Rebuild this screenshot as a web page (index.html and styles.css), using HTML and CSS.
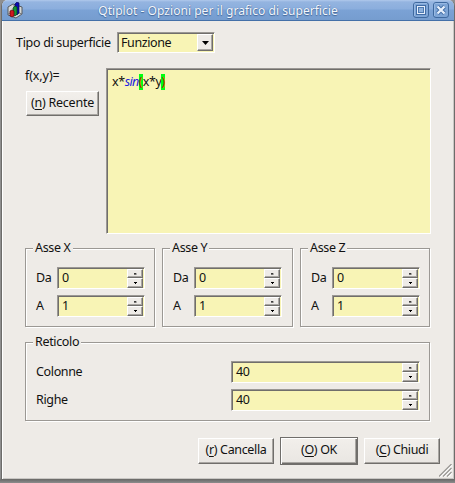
FILE: index.html
```html
<!DOCTYPE html>
<html lang="it">
<head>
<meta charset="utf-8">
<title>Qtiplot - Opzioni per il grafico di superficie</title>
<link rel="stylesheet" href="styles.css">
</head>
<body>
<div class="window">
  <header class="titlebar">
    <svg class="app-icon" width="16" height="17" viewBox="0 0 16 17">
      <path d="M1 5 6 2 15 5v7l-6 4-8-3z" fill="#d6d8d5" stroke="#555a60"/>
      <path d="M1 12 7 9l8 3M7 3v7" fill="none" stroke="#77777a"/>
      <path d="M8 2l2-2 2 1v10l-2 2-2-1z" fill="#0909b4" stroke="#080850" stroke-width=".7"/>
      <path d="M6 6l2-2 2 1v7l-2 2-2-1z" fill="#129335" stroke="#064012" stroke-width=".7"/>
      <path d="M3 9l2-1 2 1v5l-2 1-2-1z" fill="#cf1720" stroke="#5c0508" stroke-width=".7"/>
    </svg>
    <h1 class="title">Qtiplot - Opzioni per il grafico di superficie</h1>
    <svg class="controls" width="37" height="17" viewBox="0 0 37 17">
      <g fill="#7ea5d6" stroke="#3f699f">
        <rect x=".5" y=".5" width="15" height="15" rx="2.5"/>
        <rect x="20.500" y=".5" width="15" height="15" rx="2.500"/>
      </g>
      <g fill="none" stroke="#a4c2e8" opacity=".65"><path d="M1.500 14V2.500Q1.500 1.500 2.500 1.500H14M21.500 14V2.500Q21.500 1.500 22.500 1.500H34"/></g>
      <rect x="3" y="3" width="10" height="10" fill="#416ca5"/>
      <rect x="4.500" y="4.500" width="7" height="7" fill="#4e79b0" stroke="#e7f0fc"/>
      <rect x="6" y="6" width="4" height="4" fill="#8cb0dc"/>
      <path d="M24.500 4.500l7 7m0-7l-7 7" stroke="#416ca5" stroke-width="4"/>
      <path d="M24.500 4.500l7 7m0-7l-7 7" stroke="#e7f0fc" stroke-width="2.300"/>
    </svg>
  </header>
  <main class="content">
    <div class="type-row">
      <span class="type-label">Tipo di superficie</span>
      <div class="combo sunken"><span class="combo-text">Funzione</span><span class="combo-button"><svg width="7" height="4" viewBox="0 0 7 4"><path d="M0 0h7L3.500 4z"/></svg></span></div>
    </div>
    <div class="formula-row">
      <div class="formula-side">
        <span class="formula-label">f(x,y)=</span>
        <button class="button recent"><span>(<u>n</u>) Recente</span></button>
      </div>
      <div class="editor sunken"><span class="formula">x*<i>sin</i><b>(</b>x*y<b>)</b></span></div>
    </div>
    <div class="axes">
      <section class="group axis">
        <h2>Asse X</h2>
        <div class="field"><span>Da</span><div class="spin sunken"><span class="value">0</span><span class="steps"><i class="up"></i><i class="down"></i></span></div></div>
        <div class="field"><span>A</span><div class="spin sunken"><span class="value">1</span><span class="steps"><i class="up"></i><i class="down"></i></span></div></div>
      </section>
      <section class="group axis">
        <h2>Asse Y</h2>
        <div class="field"><span>Da</span><div class="spin sunken"><span class="value">0</span><span class="steps"><i class="up"></i><i class="down"></i></span></div></div>
        <div class="field"><span>A</span><div class="spin sunken"><span class="value">1</span><span class="steps"><i class="up"></i><i class="down"></i></span></div></div>
      </section>
      <section class="group axis">
        <h2>Asse Z</h2>
        <div class="field"><span>Da</span><div class="spin sunken"><span class="value">0</span><span class="steps"><i class="up"></i><i class="down"></i></span></div></div>
        <div class="field"><span>A</span><div class="spin sunken"><span class="value">1</span><span class="steps"><i class="up"></i><i class="down"></i></span></div></div>
      </section>
    </div>
    <section class="group grid-group">
      <h2>Reticolo</h2>
      <div class="field"><span>Colonne</span><div class="spin sunken"><span class="value">40</span><span class="steps"><i class="up"></i><i class="down"></i></span></div></div>
      <div class="field"><span>Righe</span><div class="spin sunken"><span class="value">40</span><span class="steps"><i class="up"></i><i class="down"></i></span></div></div>
    </section>
    <footer class="actions">
      <button class="button"><span>(<u>r</u>) Cancella</span></button>
      <button class="button default"><span>(<u>O</u>) OK</span></button>
      <button class="button"><span>(<u>C</u>) Chiudi</span></button>
    </footer>
  </main>
  <svg class="grip" width="13" height="13" viewBox="0 0 13 13"><path d="M1 13 13 1M5 13l8-8M9 13l4-4" stroke="#fff" stroke-width="1.500"/><path d="M0 12.500 12.500 0M4 12.500 12.500 4M8 12.500 12.500 8" stroke="#9a9894" stroke-width="1.300"/></svg>
</div>
</body>
</html>
```
FILE: styles.css
```css
* { box-sizing: border-box; }
body {
  margin: 0;
  width: 455px;
  height: 483px;
  overflow: hidden;
  background: linear-gradient(#8f8f8f 478px, #6f6f6f 480px, #8c8c8c 483px);
  font: 12.5px/16px "Noto Sans", "Open Sans", sans-serif;
  letter-spacing: -0.35px;
  color: #111;
}
.window {
  position: relative;
  width: 454px;
  height: 480px;
  margin-left: 1px;
  background: #eeebe7;
  border: solid #6d6c6a;
  border-width: 0 1px 1px;
  border-radius: 6px 6px 0 0;
  box-shadow: inset 1px 0 #fff, inset -1px -1px #c9c7c4;
  overflow: hidden;
}
.titlebar {
  display: flex;
  height: 21px;
  padding: 2px 4px 0 5px;
  background: linear-gradient(#b0c9eb 0, #94b4e0 2px, #8baedd 9px, #7ba2d5 10px, #769dcf);
  border-bottom: 1px solid #4470a8;
}
.app-icon { flex: none; }
.title {
  flex: 1;
  margin: 0;
  text-align: center;
  font-weight: 400;
  font-size: 12px;
  line-height: 17px;
  letter-spacing: 0.04px;
  white-space: nowrap;
  color: #f3f7fd;
  text-shadow: 0 1px 1px #44689a, 0 0 1px #44689a;
}
.controls { flex: none; }
.content { display: flex; flex-direction: column; padding: 11px 22px 0 23px; }
.sunken {
  background: #f8f4b5;
  border: 1px solid;
  border-color: #9b9894 #fff #fff #9b9894;
  box-shadow: inset 1px 1px #706e6b;
}
.type-row { display: flex; align-items: center; height: 21px; margin-left: -9px; }
.type-label { width: 101px; white-space: nowrap; letter-spacing: -0.31px; }
.combo { display: flex; width: 98px; height: 21px; padding: 1px; }
.combo-text { flex: 1; padding: 1px 0 0 2px; letter-spacing: -0.4px; }
.combo-button {
  display: flex;
  width: 16px;
  align-items: center;
  justify-content: center;
  background: #eeebe7;
  border: 1px solid;
  border-color: #fff #706e6b #706e6b #fff;
  box-shadow: inset -1px -1px #a9a6a2;
}
.formula-row { display: flex; margin-top: 15px; }
.formula-side { display: flex; flex-direction: column; width: 81px; align-items: flex-start; }
.formula-label { height: 23px; letter-spacing: -0.1px; }
.editor { width: 325px; height: 166px; padding: 5px 4px 5px 5px; }
.formula { display: flex; letter-spacing: -0.4px; }
.formula i { width: 15px; letter-spacing: -0.7px; margin-right: -1px; color: #2020e0; }
.formula b { width: 4px; letter-spacing: 0; font-weight: 400; color: #d32000; background: #00ff12; }
.button {
  height: 26px;
  padding: 0 0 1px;
  font: inherit;
  letter-spacing: inherit;
  color: inherit;
  background: linear-gradient(#f2efeb, #e9e6e2);
  border: 1px solid;
  border-color: #fff #706e6b #706e6b #fff;
  box-shadow: inset -1px -1px #a9a6a2;
  white-space: nowrap;
}
.button u { text-underline-offset: 2px; }
.recent { width: 73px; height: 25px; margin-left: 1px; letter-spacing: -0.25px; }
.axes { display: grid; grid-template-columns: 131px 132px 131px; column-gap: 6px; margin-top: 14px; }
.group {
  border: 1px solid #9b9894;
  box-shadow: 1px 1px #fff, inset 1px 1px #fff;
}
.group h2 {
  width: max-content;
  height: 16px;
  margin: -9px 0 0 7px;
  padding: 0 2px;
  font: inherit;
  background: #eeebe7;
}
.axes .group { height: 79px; width: 130px; }
.axes .group:nth-child(2) { width: 131px; }
.field { display: flex; align-items: center; height: 22px; padding-left: 10px; }
.group h2 + .field { margin: 11px 0 6px; }
.axis .field > span { width: 21px; }
.spin { display: flex; width: 88px; height: 22px; padding: 0 1px 0 4px; }
.value { flex: 1; line-height: 19px; }
.steps { width: 16px; padding-top: 1px; display: flex; flex-direction: column; }
.steps i {
  height: 9px;
  background: #eeebe7;
  border: 1px solid;
  border-color: #fff #706e6b #706e6b #fff;
  box-shadow: inset -1px -1px #a9a6a2;
  display: flex;
  align-items: center;
  justify-content: center;
}
.steps i.down { height: 10px; }
.steps i::before { content: ""; width: 3px; height: 2px; background: #000; clip-path: polygon(34% 0, 67% 0, 67% 50%, 100% 50%, 100% 100%, 0 100%, 0 50%, 34% 50%); }
.steps .down::before { transform: rotate(180deg); }
.grid-group { width: 405px; height: 79px; margin-top: 15px; }
.grid-group .field > span { flex: 1; }
.grid-group .spin { width: 189px; margin-right: 9px; }
.actions { display: flex; align-items: center; align-self: flex-end; gap: 6px; height: 29px; margin: 15px -8px 0 0; }
.actions .button { width: 76px; }
.actions .default { width: 78px; height: 28px; border: 1px solid #706e6b; box-shadow: inset 1px 1px #fff, inset -1px -1px #706e6b, inset -2px -2px #a9a6a2; }
.grip { position: absolute; right: 2px; bottom: 2px; }
```
